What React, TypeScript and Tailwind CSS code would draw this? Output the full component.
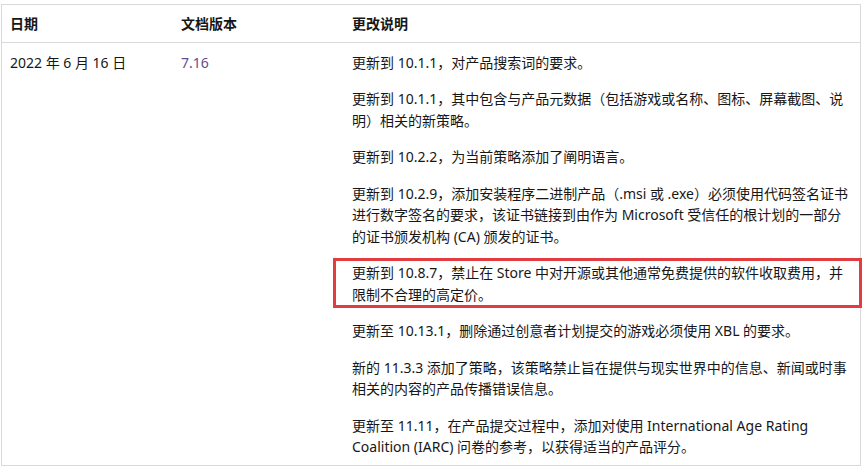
import React from "react";

const paras: { lines: string[]; boxed?: boolean }[] = [
  { lines: ["更新到 10.1.1，对产品搜索词的要求。"] },
  {
    lines: [
      "更新到 10.1.1，其中包含与产品元数据（包括游戏或名称、图标、屏幕截图、说",
      "明）相关的新策略。",
    ],
  },
  { lines: ["更新到 10.2.2，为当前策略添加了阐明语言。"] },
  {
    lines: [
      "更新到 10.2.9，添加安装程序二进制产品（.msi 或 .exe）必须使用代码签名证书",
      "进行数字签名的要求，该证书链接到由作为 Microsoft 受信任的根计划的一部分",
      "的证书颁发机构 (CA) 颁发的证书。",
    ],
  },
  {
    lines: [
      "更新到 10.8.7，禁止在 Store 中对开源或其他通常免费提供的软件收取费用，并",
      "限制不合理的高定价。",
    ],
    boxed: true,
  },
  { lines: ["更新至 10.13.1，删除通过创意者计划提交的游戏必须使用 XBL 的要求。"] },
  {
    lines: [
      "新的 11.3.3 添加了策略，该策略禁止旨在提供与现实世界中的信息、新闻或时事",
      "相关的内容的产品传播错误信息。",
    ],
  },
  {
    lines: [
      "更新至 11.11，在产品提交过程中，添加对使用 International Age Rating",
      "Coalition (IARC) 问卷的参考，以获得适当的产品评分。",
    ],
  },
];

export default function App() {
  return (
    <div
      className="bg-white w-[867px] h-[469px] pt-[4px] pl-px text-[14px] leading-[21.5px] text-[#171717]"
      style={{ fontFamily: '"Noto Sans", "Noto Sans CJK SC", sans-serif' }}
    >
      <div className="w-[860px] border border-[#d9d9d9]">
        <div className="grid grid-cols-[171px_171px_1fr] border-b border-[#d9d9d9] font-bold">
          <div className="pl-[8px] pt-[8px] pb-[7px]">日期</div>
          <div className="pl-[8px] pt-[8px] pb-[7px]">文档版本</div>
          <div className="pl-[8px] pt-[8px] pb-[7px]">更改说明</div>
        </div>
        <div className="grid grid-cols-[171px_171px_1fr]">
          <div className="pl-[8px] pt-[9px]">2022 年 6 月 16 日</div>
          <div className="pl-[8px] pt-[9px] text-[#5e4f8c]">7.16</div>
          <div className="pl-[8px] pr-[8px] pt-[9px] pb-[7px] flex flex-col gap-[15px]">
            {paras.map((p, i) => (
              <div key={i} className="relative">
                {p.lines.map((l, j) => (
                  <div key={j} className="whitespace-nowrap">
                    {l}
                  </div>
                ))}
                {p.boxed && (
                  <div className="absolute left-[-19px] right-[-10px] top-[-4px] bottom-[-3px] border-[3px] border-[#e23b40]" />
                )}
              </div>
            ))}
          </div>
        </div>
      </div>
    </div>
  );
}
